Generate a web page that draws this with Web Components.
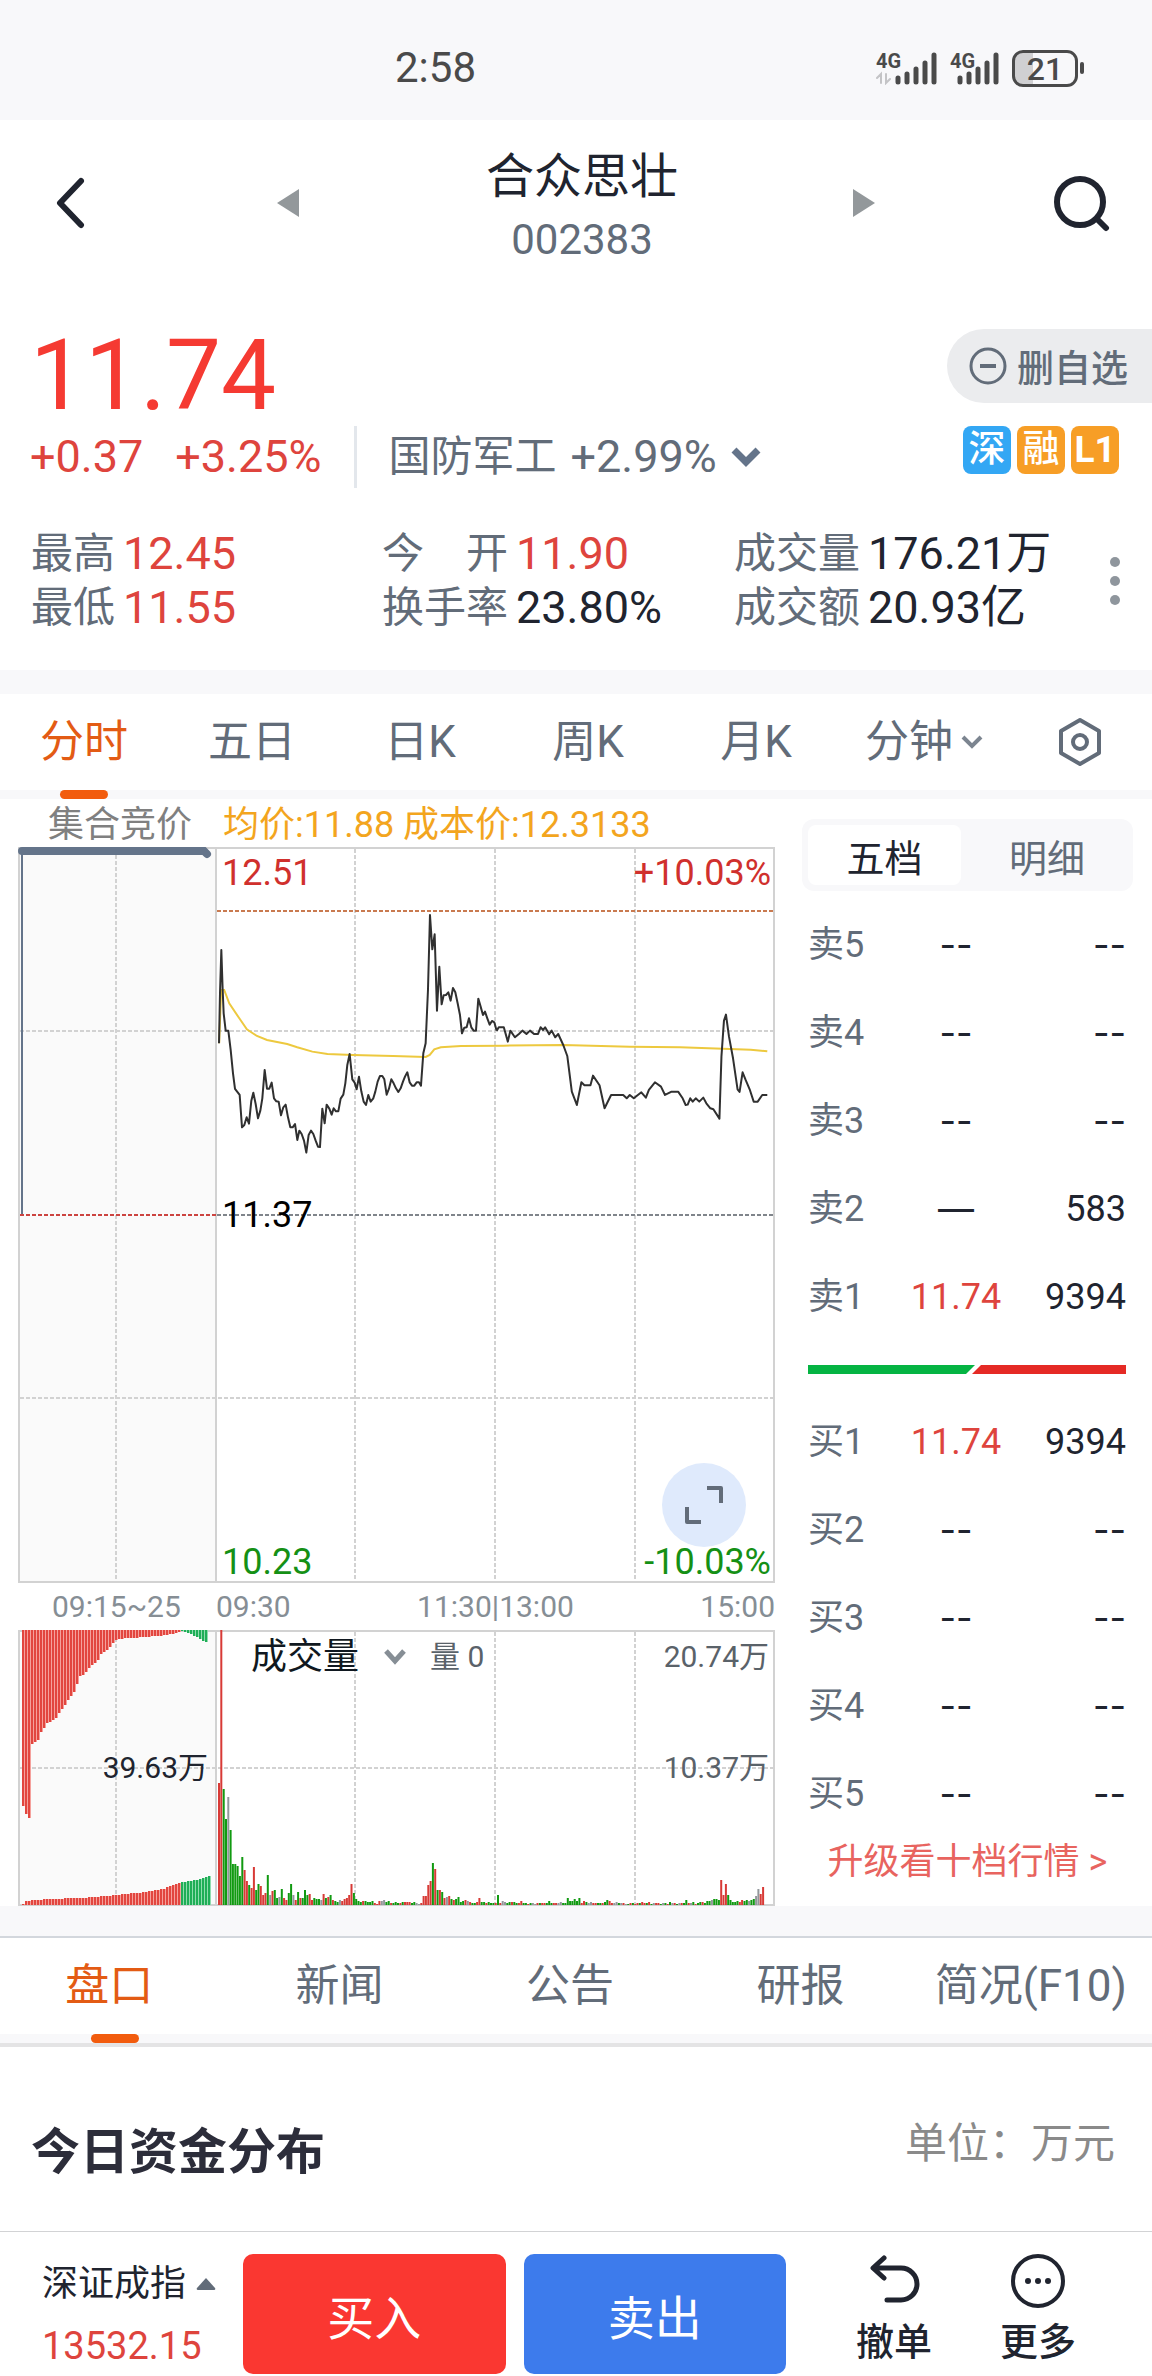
<!DOCTYPE html>
<html lang="zh-CN">
<head>
<meta charset="utf-8">
<meta name="viewport" content="width=device-width, initial-scale=1">
<title>合众思壮 002383</title>
<style>
  :root {
    --ink: #20242f;
    --muted: #626c79;
    --soft: #f8f8fa;
    --up: #de443d;
    --down: #159015;
    --accent: #f25c0e;
  }
  body {
    margin: 0;
    background: #fff;
    color: var(--ink);
    font-family: Roboto, "Noto Sans CJK SC", sans-serif;
  }
  .market {
    display: grid;
    grid-template-columns: minmax(0, 1fr) 331px;
    column-gap: 27px;
    padding: 0 19px 0 18px;
    border-bottom: 30px solid var(--soft);
  }
  .info-tabs {
    border-top: 2px solid #d3d7dd;
    border-bottom: 4px solid #e4e4e5;
  }
</style>
</head>
<body>
  <status-bar>2:58</status-bar>
  <stock-header>
    合众思壮
    <span slot="code">002383</span>
  </stock-header>
  <quote-summary></quote-summary>

  <tab-strip style="--columns: repeat(6, 7fr) 6fr">
    <tab-item selected>分时</tab-item>
    <tab-item>五日</tab-item>
    <tab-item>日K</tab-item>
    <tab-item>周K</tab-item>
    <tab-item>月K</tab-item>
    <tab-item>分钟<svg slot="icon" width="22" height="14" viewBox="0 0 22 14" fill="none" stroke="#7c8590" stroke-width="4"><path d="M2 2l9 9 9-9"/></svg></tab-item>
    <tab-item label="设置"><svg slot="icon" width="46" height="50" viewBox="0 0 46 50" fill="none" stroke="#626c79" stroke-width="4"><path d="M23 3l19 11v22L23 47 4 36V14z" stroke-linejoin="round"/><circle cx="23" cy="25" r="7"/></svg></tab-item>
  </tab-strip>

  <main class="market">
    <div>
      <price-chart></price-chart>
      <volume-chart></volume-chart>
    </div>
    <order-panel></order-panel>
  </main>

  <tab-strip class="info-tabs" style="--columns: repeat(5, 1fr); --shift: 12px">
    <tab-item selected>盘口</tab-item>
    <tab-item>新闻</tab-item>
    <tab-item>公告</tab-item>
    <tab-item>研报</tab-item>
    <tab-item>简况(F10)</tab-item>
  </tab-strip>

  <section-title>
    今日资金分布
    <span slot="unit">单位：万元</span>
  </section-title>

  <trade-bar></trade-bar>

<script>
const baseStyles = /*css*/ `
  :host, * { box-sizing: border-box; }
  button, select {
    margin: 0;
    padding: 0;
    border: 0;
    background: none;
    color: inherit;
    font: inherit;
    cursor: pointer;
  }
  svg { display: block; flex: none; }
`;

// every element below only needs a shadow root filled from its markup
class BaseElement extends HTMLElement {
  constructor() {
    super();
    this.attachShadow({ mode: "open" });
    const template = document.createElement("template");
    template.innerHTML = `<style>${baseStyles}</style>` + this.render();
    this.shadowRoot.appendChild(template.content.cloneNode(true));
  }
  render() {
    return "<slot></slot>";
  }
}

class StatusBar extends BaseElement {
  render() {
    return /*html*/ `
    <style>
      :host {
        display: grid;
        grid-template-columns: 1fr 1fr;
        align-items: center;
        height: 120px;
        padding: 16px 68px 0 395px;
        background: var(--soft);
        color: #4a4a4a;
        font-size: 42px;
        line-height: 48px;
      }
      .icons {
        display: flex;
        justify-content: flex-end;
        align-items: center;
        gap: 12px;
      }
      .net { display: grid; }
      .net > * { grid-area: 1 / 1; }
      .net span {
        font-size: 20px;
        font-weight: 700;
        line-height: 20px;
      }
      .battery { display: flex; align-items: center; gap: 2px; }
      .level {
        width: 66px;
        height: 37px;
        border: 3px solid #4a4a4a;
        border-radius: 11px;
        background: linear-gradient(to right, #d0d0d2 30%, transparent 30%);
        font-size: 32px;
        font-weight: 500;
        line-height: 32px;
        text-align: center;
      }
      .tip { width: 4px; height: 12px; border-radius: 2px; background: #4a4a4a; }
    </style>
    <slot></slot>
    <div class="icons">
      <div class="net">
        <svg width="62" height="34" viewBox="0 0 62 34" fill="none" stroke="#4a4a4a" stroke-width="5" stroke-linecap="round">
          <path d="M22 27v4M31 23v8M40 18v13M49 12v19M58 4v27"/>
          <path d="M5 32V23l-4 4M10 23v9l4-4" stroke="#c4c4c6" stroke-width="2"/>
        </svg>
        <span>4G</span>
      </div>
      <div class="net">
        <svg width="50" height="34" viewBox="0 0 50 34" fill="none" stroke="#4a4a4a" stroke-width="5" stroke-linecap="round">
          <path d="M10 27v4M19 23v8M28 18v13M37 12v19M46 4v27"/>
        </svg>
        <span>4G</span>
      </div>
      <div class="battery"><div class="level">21</div><div class="tip"></div></div>
    </div>`;
  }
}
customElements.define("status-bar", StatusBar);

class StockHeader extends BaseElement {
  render() {
    return /*html*/ `
    <style>
      :host {
        display: grid;
        grid-template-columns: 1fr 56% 1fr;
        align-items: center;
        padding: 15px 42px;
      }
      .back { margin-left: 12px; }
      .stock {
        display: flex;
        justify-content: space-between;
        align-items: center;
      }
      .name { padding: 10px 0 0 12px; text-align: center; line-height: 63px; }
      h1 { margin: 0; font-size: 48px; font-weight: 400; line-height: 63px; }
      .code { color: var(--muted); font-size: 42px; }
      .search { justify-self: end; }
    </style>
    <button class="back" aria-label="返回"><svg width="32" height="52" viewBox="0 0 32 52" fill="none" stroke="#20242f" stroke-width="6" stroke-linecap="round" stroke-linejoin="round"><path d="M27 4L6 26l21 22"/></svg></button>
    <div class="stock">
      <button aria-label="上一只"><svg width="22" height="28" viewBox="0 0 22 28" fill="#93989b"><path d="M22 0v28L0 14z"/></svg></button>
      <div class="name">
        <h1><slot></slot></h1>
        <div class="code"><slot name="code"></slot></div>
      </div>
      <button aria-label="下一只"><svg width="22" height="28" viewBox="0 0 22 28" fill="#93989b"><path d="M0 0v28l22-14z"/></svg></button>
    </div>
    <button class="search" aria-label="搜索"><svg width="58" height="58" viewBox="0 0 58 58" fill="none" stroke="#20242f" stroke-width="6" stroke-linecap="round"><circle cx="28" cy="28" r="23"/><path d="M46 46l8 8"/></svg></button>`;
  }
}
customElements.define("stock-header", StockHeader);

class QuoteSummary extends BaseElement {
  render() {
    return /*html*/ `
    <style>
      :host {
        display: block;
        padding-top: 20px;
        border-bottom: 24px solid var(--soft);
      }
      .top {
        display: grid;
        grid-template-columns: 1fr auto;
        grid-template-rows: 120px 62px;
        padding-left: 30px;
      }
      .price {
        padding-top: 20px;
        color: #f53a32;
        font-size: 98px;
        line-height: 100px;
      }
      .watch {
        align-self: center;
        display: flex;
        align-items: center;
        gap: 10px;
        height: 74px;
        padding: 0 24px 0 22px;
        border-radius: 37px 0 0 37px;
        background: #ebecee;
        color: var(--muted);
        font-size: 37px;
        font-weight: 500;
      }
      .change {
        display: flex;
        align-items: center;
        color: var(--up);
        font-size: 45px;
        line-height: 62px;
      }
      .change > span + span { margin-left: 32px; }
      .sector {
        display: flex;
        align-items: center;
        gap: 14px;
        margin-left: 32px;
        padding-left: 32px;
        border-left: 3px solid #e3e7ec;
        color: var(--muted);
      }
      .sector small { font-size: 42px; }
      .badges {
        display: flex;
        justify-content: flex-end;
        gap: 6px;
        padding-right: 33px;
      }
      .badges span {
        width: 48px;
        height: 48px;
        border-radius: 8px;
        background: #f79e26;
        color: #fff;
        font-size: 37px;
        font-weight: 700;
        line-height: 48px;
        text-align: center;
      }
      .badges .sz { background: #33a7f4; font-weight: 500; }
      .badges .rz { font-weight: 500; }
      .stats {
        display: grid;
        grid-template-columns: 351fr 352fr 371fr 20px;
        align-items: center;
        padding: 39px 27px 35px 31px;
      }
      dl {
        display: grid;
        grid-template-columns: auto 1fr;
        column-gap: 8px;
        margin: 0;
        line-height: 54px;
      }
      dt { color: var(--muted); font-size: 42px; }
      dt.wide { display: flex; justify-content: space-between; }
      dd { margin: 0; font-size: 45px; }
      .up { color: var(--up); }
    </style>
    <div class="top">
      <div class="price">11.74</div>
      <button class="watch">
        <svg width="38" height="38" viewBox="0 0 38 38" fill="none" stroke="#626c79" stroke-width="3"><circle cx="19" cy="19" r="17"/><path d="M11 19h16" stroke-width="4"/></svg>
        删自选
      </button>
      <div class="change">
        <span>+0.37</span><span>+3.25%</span>
        <button class="sector">
          <small>国防军工</small>+2.99%
          <svg width="30" height="20" viewBox="0 0 30 20" fill="none" stroke="#64748a" stroke-width="7"><path d="M3 3l12 12L27 3"/></svg>
        </button>
      </div>
      <div class="badges"><span class="sz">深</span><span class="rz">融</span><span>L1</span></div>
    </div>
    <div class="stats">
      <dl>
        <dt>最高</dt><dd class="up">12.45</dd>
        <dt>最低</dt><dd class="up">11.55</dd>
      </dl>
      <dl>
        <dt class="wide"><span>今</span><span>开</span></dt><dd class="up">11.90</dd>
        <dt>换手率</dt><dd>23.80%</dd>
      </dl>
      <dl>
        <dt>成交量</dt><dd>176.21万</dd>
        <dt>成交额</dt><dd>20.93亿</dd>
      </dl>
      <button aria-label="更多数据"><svg width="20" height="48" viewBox="0 0 20 48" fill="#8f969d"><circle cx="10" cy="5" r="5"/><circle cx="10" cy="24" r="5"/><circle cx="10" cy="43" r="5"/></svg></button>
    </div>`;
  }
}
customElements.define("quote-summary", QuoteSummary);

class TabStrip extends BaseElement {
  render() {
    return /*html*/ `
    <style>
      :host { display: grid; grid-template-columns: var(--columns); }
    </style>
    <slot></slot>`;
  }
}
customElements.define("tab-strip", TabStrip);

class TabItem extends BaseElement {
  connectedCallback() {
    if (this.hasAttribute("label")) {
      this.shadowRoot.querySelector("button").setAttribute("aria-label", this.getAttribute("label"));
    }
  }
  render() {
    return /*html*/ `
    <style>
      :host { display: block; color: var(--muted); font-size: 44px; }
      :host([selected]) { color: #e35b14; }
      button {
        display: flex;
        justify-content: center;
        align-items: center;
        gap: 8px;
        width: 100%;
        height: 96px;
        padding-right: var(--shift, 0);
        line-height: 60px;
        white-space: nowrap;
      }
      .rail { height: 9px; background: var(--soft); }
      .rail i {
        display: block;
        width: 48px;
        height: 9px;
        margin: 0 auto;
        border-radius: 5px;
      }
      :host([selected]) i { background: var(--accent); }
    </style>
    <button><slot></slot><slot name="icon"></slot></button>
    <div class="rail"><i></i></div>`;
  }
}
customElements.define("tab-item", TabItem);

// overlays share the svg's grid area so they stay in flow
const chartStyles = /*css*/ `
  :host { display: block; }
  .plot {
    display: grid;
    grid-template-columns: 198fr 559fr;
  }
  .plot > svg { grid-area: 1 / 1 / -1 / -1; width: 100%; }
`;

class PriceChart extends BaseElement {
  render() {
    return /*html*/ `
    <style>
      ${chartStyles}
      .legend {
        display: grid;
        grid-template-columns: 198fr 559fr;
        height: 48px;
        padding-top: 2px;
        color: #808080;
        font-size: 36px;
        line-height: 48px;
        white-space: nowrap;
      }
      .legend span { padding-left: 30px; }
      .legend .avg { padding-left: 7px; color: #f3a51e; }
      .plot { grid-template-rows: 1fr 1fr; font-size: 36px; line-height: 42px; }
      .plot > span, .plot > button { grid-column: 2; }
      .plot > span { padding: 5px 4px 0 6px; }
      .high { grid-row: 1; color: #d0302d; }
      .base { grid-row: 1; align-self: end; margin-bottom: -21px; color: #000; }
      .low { grid-row: 2; align-self: end; color: var(--down); }
      .right { justify-self: end; }
      .zoom {
        grid-row: 2;
        place-self: end;
        display: grid;
        place-content: center;
        width: 84px;
        height: 84px;
        margin: 0 29px 36px 0;
        border-radius: 50%;
        background: #dfeafc;
      }
      .axis {
        display: grid;
        grid-template-columns: 594fr 559fr 559fr 559fr;
        height: 47px;
        color: #868e95;
        font-size: 30px;
        line-height: 47px;
      }
      .axis span:first-child { padding-left: 34px; }
      .axis .noon { text-align: center; }
      .axis span:last-child { text-align: right; }
    </style>
    <div class="legend"><span>集合竞价</span><span class="avg">均价:11.88 成本价:12.3133</span></div>
    <div class="plot">
      <svg height="736" viewBox="0 0 757 736" preserveAspectRatio="none" fill="none">
        <rect width="198" height="736" fill="#fafafa"/>
        <g stroke="#d2d2d2" stroke-width="2">
          <path d="M98 2v732M337 2v732M477 2v732M617 2v732M2 184h755M2 551h755" stroke-dasharray="4 2"/>
          <path d="M1 1v734M198 1v734M756 1v734M0 1h757M0 735h757"/>
        </g>
        <path d="M199 64h558" stroke="#c97a50" stroke-width="2" stroke-dasharray="4 2"/>
        <path d="M2 368h196" stroke="#cc4440" stroke-width="2" stroke-dasharray="4 2"/>
        <path d="M199 368h558" stroke="#80858b" stroke-width="2" stroke-dasharray="4 2"/>
        <path d="M4 5v362" stroke="#64748a" stroke-width="2"/>
        <path d="M4 4h182l3 3" stroke="#64748a" stroke-width="8" stroke-linecap="round"/>
        <g transform="translate(-18 -67) scale(.5038 .3333)">
          <polyline vector-effect="non-scaling-stroke" stroke="#edc93f" stroke-width="2" points="435,790 439,630 445,630 455,670 475,715 490,748 510,768 530,780 570,792 590,802 620,815 650,822 700,825 780,828 845,831 853,825 862,808 875,802 915,798 1000,797 1118,795 1250,800 1350,802 1435,806 1490,809 1523,814"/>
        </g>
        <g stroke="#303030" stroke-width="2" stroke-linejoin="round">
          <g transform="translate(182 33) scale(.3333)">
            <polyline vector-effect="non-scaling-stroke" points="57,490 60,340 64,210 68,330 71,400 77,452 85,452 92,510 99,580 105,627 119,645 126,742 133,735 140,712 147,731 154,662 160,638 167,672 174,715 181,692 187,655 194,570 201,626 208,626 215,608 222,655 229,664 236,665 243,706 250,682 257,674 264,712 271,742 278,742 285,732 292,780 298,752 305,762 312,782 319,818 326,765 333,752 340,762 347,782 354,800 360,801 367,686 374,730 380,674 388,686 395,704 401,685 408,694 415,694 422,656 430,644 436,610 442,555 449,522 457,598 464,608 470,628 477,590 484,634 491,665 498,675 505,645 512,665 520,655 526,635 533,605 540,588 547,588 553,598 560,644 567,626 574,598 581,610 588,625 595,636 602,625 609,605 615,590 622,577 629,607 636,617 643,617 650,607 657,607 663,617 670,520 677,490 684,330 690,105 697,208 704,163 711,392 718,260 725,373 731,346 738,345 745,337 752,362 759,324 766,337 773,370 780,405 786,460 793,443 800,442 807,415 814,442 821,452 828,452 835,356 842,380 849,405 855,395 862,415 869,434 876,423 883,427 890,452"/>
          </g>
          <g transform="translate(-18 -67) scale(.5038 .3333)">
            <polyline vector-effect="non-scaling-stroke" points="986,752 990,742 1000,742 1008,785 1013,752 1022,772 1030,762 1037,752 1045,762 1052,752 1060,762 1068,762 1073,742 1078,750 1082,742 1090,763 1095,752 1102,772 1108,762 1118,795 1126,828 1135,935 1145,975 1154,907 1160,916 1172,916 1177,887 1190,916 1200,985 1213,945 1237,945 1244,955 1250,945 1258,955 1273,937 1282,953 1288,930 1300,907 1312,920 1320,945 1333,935 1346,935 1355,955 1361,975 1365,974 1370,955 1375,965 1381,955 1388,965 1396,953 1402,970 1410,985 1416,988 1428,1016 1432,830 1437,722 1441,704 1447,770 1455,835 1464,928 1468,936 1474,877 1480,900 1488,928 1496,965 1504,965 1513,945 1523,945"/>
          </g>
        </g>
      </svg>
      <span class="high">12.51</span><span class="high right">+10.03%</span>
      <span class="base">11.37</span>
      <span class="low">10.23</span><span class="low right">-10.03%</span>
      <button class="zoom" aria-label="全屏"><svg width="40" height="40" viewBox="0 0 40 40" fill="none" stroke="#626c79" stroke-width="4"><path d="M23 3h14v15M3 22v15h14" stroke-linejoin="round"/></svg></button>
    </div>
    <div class="axis"><span>09:15~25</span><span>09:30</span><span class="noon">11:30|13:00</span><span>15:00</span></div>`;
  }
}
customElements.define("price-chart", PriceChart);

// [x, length] stops, bars between two stops are interpolated
const auctionTop = [
  [4, 176], [5, 176], [8, 188], [12, 188], [13, 114], [19, 110], [22, 102], [28, 93], [36, 89],
  [42, 80], [50, 69], [56, 61], [60, 46], [64, 45], [72, 36], [78, 32], [81, 25], [88, 20],
  [98, 9], [126, 7], [148, 5], [164, 1], [168, 2], [176, 6], [190, 14],
];
const auctionBottom = [
  [4, 1], [6, 4], [30, 6], [62, 7], [98, 10], [126, 13], [144, 16], [160, 22], [182, 26], [192, 30],
];

// one token per minute: colour letter, then height
const minuteVolume = `
  r122 r275 g116 g86 e108 g75 g41 g41 g39 g29 g48 r35 r24 g20 r17 r38 g15 g21 r19 r10 r12 g30
  e10 r14 g15 g7 e8 g16 r7 r5 g12 g21 e10 r5 g13 r7 g7 g15 g10 r11 r5 g7 g6 g6 e5 r11 g7 r8 g10
  r5 g4 g3 e5 r4 r6 r7 r10 r21 g12 g6 g4 g3 r4 g4 g3 g3 g4 r2 r1 r4 e4 e5 g3 g4 r2 g2 g3 g2
  r2 g3 r3 r3 r3 g2 g3 e2 e1 r2 r9 r9 r20 r24 g42 r36 g15 r15 g13 r7 e8 r9 g6 r5 g6 g8 g3 g4
  r5 e4 r3 g2 g2 r3 r7 g3 g3 r2 g3 g2 g2 r2 g10 r2 e4 e3 g2 g3 r3 g3 g2 r2 r4 g2 g2 r1 g2 e2
  e1 r2 g2 r2 r2 g2 g4 g2 r2 r2 e2 e3 g2 g2 g7 g4 g4 g6 g4 g7 r2 r4 g3 e2 e3 r2 r2 g2 g2 r2 g3 g5
  r4 r2 e2 e3 g2 e2 r2 e1 g1 r2 g2 r1 r2 g2 r3 r2 g2 r3 g1 e2 r2 r2 g1 e2 g2 r1 g3 e2 r2 g1 e2 r2
  g2 g5 r2 e2 g3 r1 g2 g3 r3 g2 g4 g4 e5 g6 g6 g5 r25 r10 r21 g10 g5 g3 g3 g4 r3 r5 g4 g5 e4 g5
  g6 e9 e16 r11 r18
`.trim().split(/\s+/);

class VolumeChart extends BaseElement {
  connectedCallback() {
    const bars = this.shadowRoot.querySelector("#bars");
    bars.innerHTML = this.auction(auctionTop, true) + this.auction(auctionBottom, false) + this.minutes();
  }

  auction(stops, fromTop) {
    let out = "";
    for (let i = 1; i < stops.length; i++) {
      const [x0, h0] = stops[i - 1];
      const [x1, h1] = stops[i];
      for (let x = Math.ceil((x0 - 1) / 3) * 3 + 1; x < x1; x += 3) {
        if (x < x0) continue;
        const h = Math.round(h0 + ((h1 - h0) * (x - x0)) / (x1 - x0));
        const green = x > 162;
        const y = fromTop ? 0 : 275 - h;
        out += `<rect x="${x}" y="${y}" width="3" height="${h}" fill="${green ? "#8fdcae" : "#f5a19c"}"/>`;
        out += `<rect x="${x}" y="${y}" width="2" height="${h}" fill="${green ? "#1fae57" : "#e2463f"}"/>`;
      }
    }
    return out;
  }

  minutes() {
    const colors = { r: "#d83a36", g: "#119a11", e: "#92979b" };
    const step = 558 / 240;
    return minuteVolume
      .map((token, i) => {
        const h = Number(token.slice(1));
        const x = (200 + i * step).toFixed(1);
        return `<rect x="${x}" y="${275 - h}" width="2" height="${h}" fill="${colors[token[0]]}"/>`;
      })
      .join("");
  }

  render() {
    return /*html*/ `
    <style>
      ${chartStyles}
      .plot { grid-template-rows: 138px 138px; color: #5a6269; font-size: 30px; line-height: 36px; }
      .head {
        grid-area: 1 / 2;
        display: flex;
        align-items: center;
        height: 50px;
        padding: 4px 6px 0 35px;
      }
      .pick { display: flex; align-items: center; gap: 24px; margin-right: 24px; color: #101820; font-size: 36px; }
      select { appearance: none; line-height: 44px; }
      .max { margin-left: auto; }
      .mid { grid-area: 1 / 2; place-self: end; margin: 0 6px -18px 0; }
      .auction { grid-area: 1 / 1; place-self: end; margin: 0 8px -18px 0; color: #20242f; }
    </style>
    <div class="plot">
      <svg height="276" viewBox="0 0 757 276" preserveAspectRatio="none" fill="none">
        <rect width="198" height="276" fill="#fafafa"/>
        <g stroke="#d2d2d2" stroke-width="2">
          <path d="M98 2v272M337 2v272M477 2v272M617 2v272M2 138h755" stroke-dasharray="4 2"/>
          <path d="M1 1v274M198 1v274M756 1v274M0 1h757M0 275h757"/>
        </g>
        <g id="bars"></g>
      </svg>
      <div class="head">
        <label class="pick">
          <select aria-label="指标"><option>成交量</option></select>
          <svg width="22" height="16" viewBox="0 0 22 16" fill="none" stroke="#868e95" stroke-width="5"><path d="M2 2l9 10 9-10"/></svg>
        </label>
        <span>量 0</span>
        <span class="max">20.74万</span>
      </div>
      <span class="mid">10.37万</span>
      <span class="auction">39.63万</span>
    </div>`;
  }
}
customElements.define("volume-chart", VolumeChart);

const sells = [["卖5"], ["卖4"], ["卖3"], ["卖2", "—", "583"], ["卖1", "11.74", "9394"]];
const buys = [["买1", "11.74", "9394"], ["买2"], ["买3"], ["买4"], ["买5"]];

class OrderPanel extends BaseElement {
  rows(list) {
    return list
      .map(([name, price = "--", amount = "--"]) => {
        const cls = /\d/.test(price) ? "up" : "dash";
        return `<tr><th scope="row">${name}</th><td class="${cls}">${price}</td><td class="${amount === "--" ? "dash" : ""}">${amount}</td></tr>`;
      })
      .join("");
  }
  render() {
    return /*html*/ `
    <style>
      :host { display: block; padding-top: 20px; }
      .switch {
        display: grid;
        grid-template-columns: 153fr 172fr;
        height: 72px;
        margin-bottom: 10px;
        padding: 6px 0 6px 6px;
        border-radius: 12px;
        background: var(--soft);
        color: var(--muted);
        font-size: 38px;
      }
      .switch .on { border-radius: 8px; background: #fff; color: var(--ink); }
      table {
        width: 100%;
        border-collapse: collapse;
        table-layout: fixed;
        font-size: 36px;
        line-height: 44px;
      }
      tr { height: 88px; }
      th, td { padding: 0; }
      th { width: 90px; padding-left: 6px; color: var(--muted); font-size: 36px; font-weight: 400; text-align: left; }
      td { width: 128px; text-align: center; }
      td:last-child { width: auto; padding-right: 7px; text-align: right; }
      .up { color: var(--up); }
      .dash { font-family: Inter, sans-serif; }
      .ratio { display: flex; height: 9px; margin: 24px 7px 24px 6px; }
      .ratio i { height: 9px; }
      .sell { flex: 167; background: #05b443; clip-path: polygon(0 0, 100% 0, calc(100% - 9px) 100%, 0 100%); }
      .buy { flex: 154; margin-left: -3px; background: #e52a25; clip-path: polygon(9px 0, 100% 0, 100% 100%, 0 100%); }
      a {
        display: block;
        color: #e8645f;
        font-size: 36px;
        line-height: 48px;
        text-align: center;
        text-decoration: none;
      }
    </style>
    <div class="switch"><button class="on">五档</button><button>明细</button></div>
    <table aria-label="卖盘">${this.rows(sells)}</table>
    <div class="ratio"><i class="sell"></i><i class="buy"></i></div>
    <table aria-label="买盘">${this.rows(buys)}</table>
    <a href="#level2">升级看十档行情 &gt;</a>`;
  }
}
customElements.define("order-panel", OrderPanel);

class SectionTitle extends BaseElement {
  render() {
    return /*html*/ `
    <style>
      :host {
        display: flex;
        justify-content: space-between;
        padding: 65px 37px 50px 31px;
      }
      h2 { margin: 0; padding-top: 13px; color: #2c2d3a; font-size: 49px; font-weight: 700; line-height: 56px; }
      .unit { color: #8a8a8a; font-size: 42px; line-height: 64px; }
    </style>
    <h2><slot></slot></h2>
    <div class="unit"><slot name="unit"></slot></div>`;
  }
}
customElements.define("section-title", SectionTitle);

class TradeBar extends BaseElement {
  render() {
    return /*html*/ `
    <style>
      :host {
        display: grid;
        grid-template-columns: 243fr 543fr 366fr;
        align-items: start;
        padding: 22px 0 3px;
        border-top: 1px solid #d2d3d5;
      }
      .index { padding: 6px 0 0 42px; font-size: 36px; line-height: 48px; text-align: left; }
      .index span { display: flex; align-items: center; gap: 10px; }
      .index b { display: block; padding-top: 14px; color: var(--up); font-size: 38px; font-weight: 400; }
      .deal { display: grid; grid-template-columns: 1fr 1fr; gap: 18px; }
      .deal button {
        height: 120px;
        border-radius: 10px;
        background: #3d7bec;
        color: #fff;
        font-size: 47px;
      }
      .deal .buy { background: #fa3731; }
      .tools { display: grid; grid-template-columns: 1fr 1fr; padding: 0 42px 0 36px; }
      .tools button { display: grid; justify-items: center; gap: 7px; font-size: 38px; font-weight: 500; line-height: 54px; }
    </style>
    <button class="index">
      <span>深证成指<svg width="20" height="12" viewBox="0 0 20 12" fill="#626c79"><path d="M10 0l9 10q1 2-1 2H2q-2 0-1-2z"/></svg></span>
      <b>13532.15</b>
    </button>
    <div class="deal"><button class="buy">买入</button><button>卖出</button></div>
    <div class="tools">
      <button><svg width="54" height="54" viewBox="0 0 54 54" fill="none" stroke="#20242f" stroke-width="5" stroke-linecap="round" stroke-linejoin="round"><path d="M17 4L6 14l11 10M7 14h27a16 16 0 0 1 0 32H20"/></svg>撤单</button>
      <button><svg width="54" height="54" viewBox="0 0 54 54" fill="#20242f"><circle cx="27" cy="27" r="25" fill="none" stroke="#20242f" stroke-width="4"/><circle cx="17" cy="27" r="3"/><circle cx="27" cy="27" r="3"/><circle cx="37" cy="27" r="3"/></svg>更多</button>
    </div>`;
  }
}
customElements.define("trade-bar", TradeBar);
</script>
</body>
</html>
